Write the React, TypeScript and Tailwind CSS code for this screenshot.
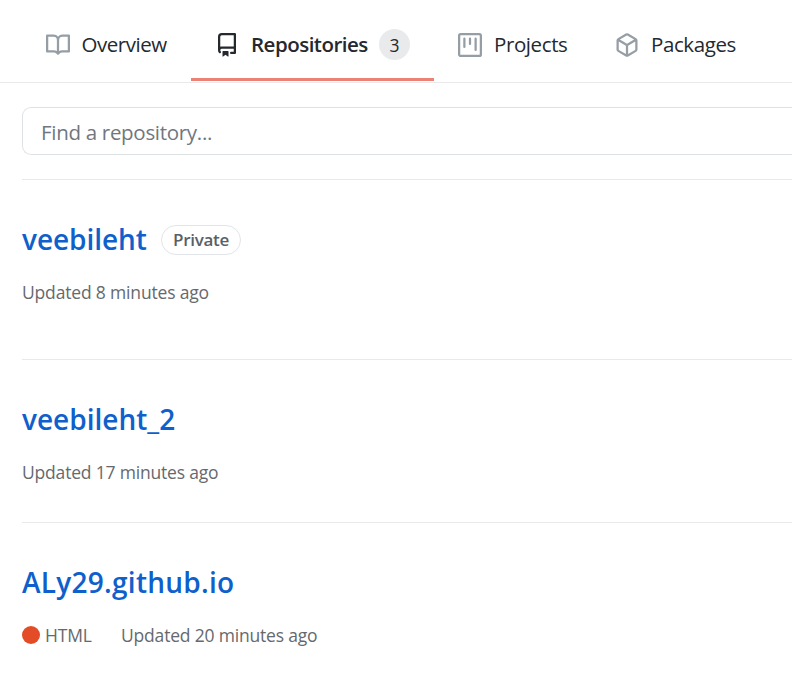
import React from "react";

const icons = {
  book: "M0 1.75A.75.75 0 01.75 1h4.253c1.227 0 2.317.59 3 1.501A3.744 3.744 0 0111.006 1h4.245a.75.75 0 01.75.75v10.5a.75.75 0 01-.75.75h-4.507a2.25 2.25 0 00-1.591.659l-.622.621a.75.75 0 01-1.06 0l-.622-.621A2.25 2.25 0 005.258 13H.75a.75.75 0 01-.75-.75V1.75zm8.755 3a2.25 2.25 0 012.25-2.25H14.5v9h-3.757c-.71 0-1.4.201-1.992.572l.004-7.322zm-1.504 7.324l.004-5.073-.002-2.253A2.25 2.25 0 005.003 2.5H1.5v9h3.757a3.75 3.75 0 011.994.574z",
  repo: "M2 2.5A2.5 2.5 0 014.5 0h8.75a.75.75 0 01.75.75v12.5a.75.75 0 01-.75.75h-2.5a.75.75 0 110-1.5h1.75v-2h-8a1 1 0 00-.714 1.7.75.75 0 01-1.072 1.05A2.495 2.495 0 012 11.5v-9zm10.5-1V9h-8c-.356 0-.694.074-1 .208V2.5a1 1 0 011-1h8zM5 12.25v3.25a.25.25 0 00.4.2l1.45-1.087a.25.25 0 01.3 0L8.6 15.7a.25.25 0 00.4-.2v-3.25a.25.25 0 00-.25-.25h-3.5a.25.25 0 00-.25.25z",
  project:
    "M1.75 0A1.75 1.75 0 000 1.75v12.5C0 15.216.784 16 1.75 16h12.5A1.75 1.75 0 0016 14.25V1.75A1.75 1.75 0 0014.25 0H1.75zM1.5 1.75a.25.25 0 01.25-.25h12.5a.25.25 0 01.25.25v12.5a.25.25 0 01-.25.25H1.75a.25.25 0 01-.25-.25V1.75zM11.75 3a.75.75 0 00-.75.75v7.5a.75.75 0 001.5 0v-7.5a.75.75 0 00-.75-.75zm-8.25.75a.75.75 0 011.5 0v5.5a.75.75 0 01-1.5 0v-5.5zM8 3a.75.75 0 00-.75.75v3.5a.75.75 0 001.5 0v-3.5A.75.75 0 008 3z",
  package:
    "M8.878.392a1.75 1.75 0 00-1.756 0l-5.25 3.045A1.75 1.75 0 001 4.951v6.098c0 .624.332 1.2.872 1.514l5.25 3.045a1.75 1.75 0 001.756 0l5.25-3.045c.54-.313.872-.89.872-1.514V4.951c0-.624-.332-1.2-.872-1.514L8.878.392zM7.875 1.69a.25.25 0 01.25 0l4.63 2.685L8 7.133 3.245 4.375l4.63-2.685zM2.5 5.677v5.372c0 .09.047.171.125.216l4.625 2.683V8.432L2.5 5.677zm6.25 8.271l4.625-2.683a.25.25 0 00.125-.216V5.677L8.75 8.432v5.516z",
};

function Icon({ name, className }: { name: keyof typeof icons; className: string }) {
  return (
    <svg viewBox="0 0 16 16" fill="currentColor" fillRule="evenodd" className={`size-6 shrink-0 ${className}`}>
      <path d={icons[name]} />
    </svg>
  );
}

export default function App() {
  return (
    <div className="h-[693px] w-full overflow-hidden bg-white font-['Open_Sans','Noto_Sans',sans-serif] whitespace-nowrap text-[#24292e]">
      <nav className="flex h-[83px] items-start border-b border-[#e7e9eb] pl-[22px] text-[20.5px] leading-8">
        <a className="flex h-[81px] w-[169px] items-center pb-2 pl-6 pt-4">
          <Icon name="book" className="text-[#959da5]" />
          <span className="ml-[11.5px] pb-0.5 tracking-[-0.45px]">Overview</span>
        </a>
        <a className="flex h-[81px] w-[243px] items-center border-b-[3px] border-[#ea8375] pb-[5px] pl-6 pt-4">
          <Icon name="repo" className="text-[#24292e]" />
          <span className="ml-3 pb-0.5 font-semibold tracking-[-0.5px]">Repositories</span>
          <span className="ml-auto mr-6 flex size-[31px] items-center justify-center rounded-full bg-[#e8eaec] text-[17.5px] font-medium">
            3
          </span>
        </a>
        <a className="flex h-[81px] w-[157px] items-center pb-2 pl-6 pt-4">
          <Icon name="project" className="text-[#959da5]" />
          <span className="ml-3 pb-0.5 tracking-[-0.4px]">Projects</span>
        </a>
        <a className="flex h-[81px] items-center pb-2 pl-6 pt-4">
          <Icon name="package" className="text-[#959da5]" />
          <span className="ml-3 pb-0.5 tracking-[-0.4px]">Packages</span>
        </a>
      </nav>

      <main className="pl-[22px]">
        <div className="border-b border-[#e7e9eb] py-6">
          <div className="flex h-12 items-center rounded-l-[9px] border border-r-0 border-[#dfe2e5] pl-[18px] pt-0.5 text-[20.5px] tracking-[-0.3px] text-[#6f7780]">
            Find a repository...
          </div>
        </div>

        <section className="h-[180px] border-b border-[#e7e9eb] pt-10">
          <div className="flex h-10 items-center">
            <h3 className="w-[125px] pb-0.5 text-[28px] font-semibold tracking-[-0.05px] text-[#0f5fcc]">veebileht</h3>
            <span className="ml-[14px] flex h-[30px] w-20 items-center justify-center rounded-full border border-[#e1e4e8] text-[17px] font-semibold tracking-[-0.3px] text-[#586069]">
              Private
            </span>
          </div>
          <p className="mt-[18px] text-[17.5px] leading-7 tracking-[-0.17px] text-[#65696e]">Updated 8 minutes ago</p>
        </section>

        <section className="h-[163px] border-b border-[#e7e9eb] pt-10">
          <h3 className="flex h-10 items-center pb-0.5 text-[28px] font-semibold text-[#0f5fcc]">veebileht_2</h3>
          <p className="mt-[18px] text-[17.5px] leading-7 tracking-[-0.19px] text-[#65696e]">Updated 17 minutes ago</p>
        </section>

        <section className="pt-10">
          <h3 className="flex h-10 items-center pb-0.5 text-[28px] font-semibold tracking-[0.27px] text-[#0f5fcc]">ALy29.github.io</h3>
          <div className="mt-[18px] flex items-center text-[17.5px] leading-7 tracking-[-0.19px] text-[#65696e]">
            <span className="size-[18px] rounded-full bg-[#e34c26]" />
            <span className="ml-[5px] w-[76px]">HTML</span>
            <span>Updated 20 minutes ago</span>
          </div>
        </section>
      </main>
    </div>
  );
}
